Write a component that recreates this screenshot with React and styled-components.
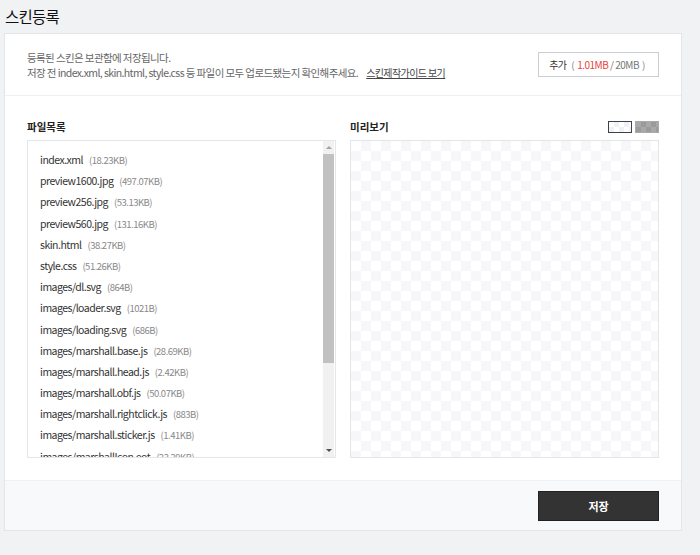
import React from 'react';
import styled, { createGlobalStyle } from 'styled-components';

const GlobalStyle = createGlobalStyle`
  html, body {
    margin: 0;
    padding: 0;
    background: #f1f2f4;
    font-family: "Noto Sans CJK KR", "Noto Sans", sans-serif;
    color: #333;
  }
  * { box-sizing: border-box; }
`;

const Page = styled.div`
  width: 700px;
  height: 555px;
  padding: 0 18px 0 4px;
  overflow: hidden;
`;

const Title = styled.h1`
  margin: 3px 0 0 1px;
  height: 30px;
  font-size: 15.5px;
  line-height: 26px;
  font-weight: 400;
  letter-spacing: -0.8px;
  color: #111;
`;

const Card = styled.section`
  background: #fff;
  border: 1px solid #e3e5e9;
`;

const Intro = styled.div`
  display: flex;
  align-items: center;
  justify-content: space-between;
  height: 62px;
  padding: 0 22px;
  border-bottom: 1px solid #eef0f2;
`;

const Notice = styled.p`
  margin: 0;
  font-size: 10.5px;
  line-height: 15px;
  letter-spacing: -0.6px;
  color: #666;
`;

const GuideLink = styled.a`
  margin-left: 8px;
  color: #444;
  font-size: 10px;
  letter-spacing: -0.6px;
  text-decoration: underline;
`;

const OutlineButton = styled.button`
  width: 121px;
  height: 25px;
  border: 1px solid #c9cdd4;
  background: #fff;
  font-family: inherit;
  font-size: 10px;
  letter-spacing: -0.5px;
  color: #333;
  padding: 0;
`;

const Paren = styled.span`
  color: #888;
  margin: 0 3px;
`;

const Used = styled.span`
  color: #e8413c;
`;

const Limit = styled.span`
  color: #777;
`;

const Body = styled.div`
  display: grid;
  grid-template-columns: 309px 309px;
  gap: 14px;
  padding: 17px 22px 22px;
`;

const Column = styled.div`
  display: flex;
  flex-direction: column;
`;

const ColumnHead = styled.div`
  display: flex;
  align-items: center;
  justify-content: space-between;
  height: 27px;
`;

const Label = styled.h2`
  margin: 0;
  font-size: 10.5px;
  font-weight: 700;
  color: #222;
`;

const Swatches = styled.div`
  display: flex;
  gap: 3px;
`;

const Swatch = styled.span`
  width: 24px;
  height: 12px;
  border: 1px solid ${p => (p.$active ? '#3a4150' : '#a9a9a9')};
  background-color: ${p => (p.$dark ? '#a9a9a9' : '#fff')};
  background-image: conic-gradient(
    ${p => (p.$dark ? '#9b9b9b' : '#f1f1f3')} 25%, transparent 0 50%,
    ${p => (p.$dark ? '#9b9b9b' : '#f1f1f3')} 0 75%, transparent 0
  );
  background-size: 10px 10px;
`;

const ListBox = styled.div`
  display: flex;
  height: 318px;
  border: 1px solid #e4e6ea;
  overflow: hidden;
`;

const FileList = styled.ul`
  flex: 1;
  margin: 0;
  padding: 8px 0 0 12px;
  list-style: none;
  overflow: hidden;
`;

const FileRow = styled.li`
  height: 21.2px;
  line-height: 21.2px;
  font-size: 10.5px;
  letter-spacing: -0.5px;
  color: #333;
  white-space: nowrap;
`;

const Size = styled.span`
  margin-left: 6px;
  font-size: 9.5px;
  color: #888;
`;

const Scrollbar = styled.div`
  display: flex;
  flex-direction: column;
  width: 11px;
  margin-right: 1px;
  background: #f1f1f1;
`;

const Arrow = styled.div`
  height: 13px;
  display: flex;
  align-items: center;
  justify-content: center;
  &::before {
    content: '';
    border-left: 3px solid transparent;
    border-right: 3px solid transparent;
    ${p => (p.$down ? 'border-top: 3px solid #505050;' : 'border-bottom: 3px solid #a3a3a3;')}
  }
`;

const Thumb = styled.div`
  height: 209px;
  background: #c1c1c1;
`;

const Spacer = styled.div`
  flex: 1;
`;

const Preview = styled.div`
  height: 318px;
  border: 1px solid #e4e6ea;
  background-color: #fff;
  background-image: conic-gradient(#f7f7f9 25%, transparent 0 50%, #f7f7f9 0 75%, transparent 0);
  background-size: 20px 20px;
`;

const Footer = styled.div`
  display: flex;
  justify-content: flex-end;
  align-items: center;
  height: 50px;
  padding: 0 22px;
  background: #f8f9fb;
  border-top: 1px solid #eef0f3;
`;

const SaveButton = styled.button`
  width: 121px;
  height: 30px;
  border: 1px solid #222;
  background: #333;
  color: #fff;
  font-family: inherit;
  font-size: 11px;
  font-weight: 700;
`;

const files = [
  ['index.xml', '18.23KB'],
  ['preview1600.jpg', '497.07KB'],
  ['preview256.jpg', '53.13KB'],
  ['preview560.jpg', '131.16KB'],
  ['skin.html', '38.27KB'],
  ['style.css', '51.26KB'],
  ['images/dl.svg', '864B'],
  ['images/loader.svg', '1021B'],
  ['images/loading.svg', '686B'],
  ['images/marshall.base.js', '28.69KB'],
  ['images/marshall.head.js', '2.42KB'],
  ['images/marshall.obf.js', '50.07KB'],
  ['images/marshall.rightclick.js', '883B'],
  ['images/marshall.sticker.js', '1.41KB'],
  ['images/marshallIcon.eot', '23.29KB'],
  ['images/marshallIcon.svg', '61.04KB'],
];

const App = () => {
  return (
    <Page>
      <GlobalStyle />
      <Title>스킨등록</Title>
      <Card>
        <Intro>
          <Notice>
            등록된 스킨은 보관함에 저장됩니다.
            <br />
            저장 전 index.xml, skin.html, style.css 등 파일이 모두 업로드됐는지 확인해주세요.
            <GuideLink href="#">스킨제작가이드 보기</GuideLink>
          </Notice>
          <OutlineButton>
            추가 <Paren>(</Paren>
            <Used>1.01MB</Used> <Limit>/ 20MB</Limit>
            <Paren>)</Paren>
          </OutlineButton>
        </Intro>
        <Body>
          <Column>
            <ColumnHead>
              <Label>파일목록</Label>
            </ColumnHead>
            <ListBox>
              <FileList>
                {files.map(([name, size]) => (
                  <FileRow key={name}>
                    {name}
                    <Size>({size})</Size>
                  </FileRow>
                ))}
              </FileList>
              <Scrollbar>
                <Arrow />
                <Thumb />
                <Spacer />
                <Arrow $down />
              </Scrollbar>
            </ListBox>
          </Column>
          <Column>
            <ColumnHead>
              <Label>미리보기</Label>
              <Swatches>
                <Swatch $active />
                <Swatch $dark />
              </Swatches>
            </ColumnHead>
            <Preview />
          </Column>
        </Body>
        <Footer>
          <SaveButton>저장</SaveButton>
        </Footer>
      </Card>
    </Page>
  );
};

export default App;
